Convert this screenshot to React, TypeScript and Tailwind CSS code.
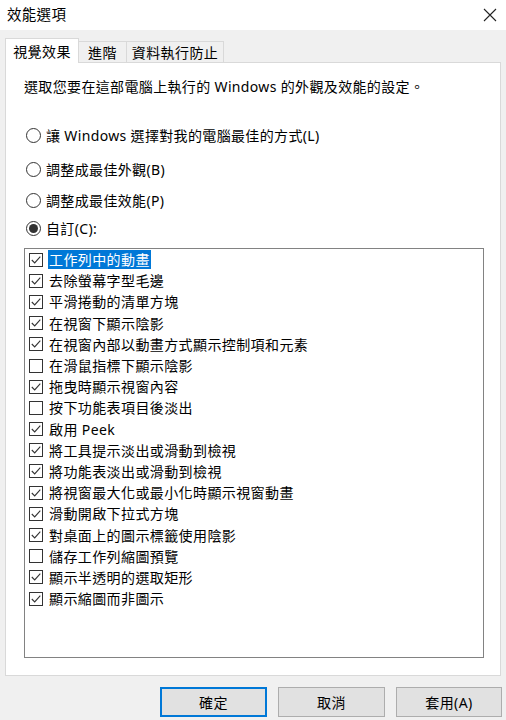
import React from "react";

const font = { fontFamily: '"Noto Sans", "Noto Sans CJK TC", sans-serif' };

const items: [string, boolean][] = [
  ["工作列中的動畫", true],
  ["去除螢幕字型毛邊", true],
  ["平滑捲動的清單方塊", true],
  ["在視窗下顯示陰影", true],
  ["在視窗內部以動畫方式顯示控制項和元素", true],
  ["在滑鼠指標下顯示陰影", false],
  ["拖曳時顯示視窗內容", true],
  ["按下功能表項目後淡出", false],
  ["啟用 Peek", true],
  ["將工具提示淡出或滑動到檢視", true],
  ["將功能表淡出或滑動到檢視", true],
  ["將視窗最大化或最小化時顯示視窗動畫", true],
  ["滑動開啟下拉式方塊", true],
  ["對桌面上的圖示標籤使用陰影", true],
  ["儲存工作列縮圖預覽", false],
  ["顯示半透明的選取矩形", true],
  ["顯示縮圖而非圖示", true],
];

function Radio({ checked }: { checked?: boolean }) {
  return (
    <span className="w-[15px] h-[15px] rounded-full border border-[#333] bg-white flex items-center justify-center shrink-0">
      {checked && <span className="w-[9px] h-[9px] rounded-full bg-[#333]" />}
    </span>
  );
}

function Check({ checked }: { checked: boolean }) {
  return (
    <span className="w-[14px] h-[14px] border border-[#333] bg-white flex items-center justify-center shrink-0">
      {checked && (
        <svg width="12" height="12" viewBox="0 0 12 12">
          <path d="M1.8 6 L4.7 8.9 L10.3 2.6" fill="none" stroke="#333" strokeWidth="1.1" />
        </svg>
      )}
    </span>
  );
}

export default function App() {
  return (
    <div className="w-[506px] h-[720px] flex flex-col bg-[#f0f0f0] text-[14px] text-black overflow-hidden" style={font}>
      <div className="h-[30px] bg-white flex items-center justify-between pl-[7px] pr-[9px] shrink-0">
        <span className="text-[14.5px] tracking-[0.3px]">效能選項</span>
        <svg width="14" height="14" viewBox="0 0 14 14">
          <path d="M1 1 L13 13 M13 1 L1 13" stroke="#222" strokeWidth="1.1" />
        </svg>
      </div>
      <div className="flex-1 flex flex-col pl-[5px] pr-[5px] pt-[8px]">
        <div className="flex items-end h-[24px] relative z-10">
          <div className="h-[25px] -mb-[1px] w-[74px] bg-white border border-[#d9d9d9] border-b-0 flex items-center justify-center tracking-[0.4px]">
            視覺效果
          </div>
          <div className="h-[21px] w-[48px] bg-[#f0f0f0] border border-[#d9d9d9] border-l-0 border-b-0 flex items-center justify-center tracking-[0.4px]">
            進階
          </div>
          <div className="h-[21px] w-[97px] bg-[#f0f0f0] border border-[#d9d9d9] border-l-0 border-b-0 flex items-center justify-center tracking-[0.4px]">
            資料執行防止
          </div>
        </div>
        <div className="h-[614px] bg-white border border-[#d9d9d9] pl-[18px] pr-[16px] pt-[14px] flex flex-col">
          <div className="h-[20px] leading-[20px] tracking-[0.35px]">選取您要在這部電腦上執行的 Windows 的外觀及效能的設定。</div>
          <div className="mt-[28px] h-[20px] flex items-center gap-[5px] pl-[2px] tracking-[0.35px]">
            <Radio />
            <span>讓 Windows 選擇對我的電腦最佳的方式(L)</span>
          </div>
          <div className="mt-[14px] h-[20px] flex items-center gap-[5px] pl-[2px] tracking-[0.35px]">
            <Radio />
            <span>調整成最佳外觀(B)</span>
          </div>
          <div className="mt-[11px] h-[20px] flex items-center gap-[5px] pl-[2px] tracking-[0.35px]">
            <Radio />
            <span>調整成最佳效能(P)</span>
          </div>
          <div className="mt-[8px] h-[20px] flex items-center gap-[5px] pl-[2px] tracking-[0.35px]">
            <Radio checked />
            <span>自訂(C):</span>
          </div>
          <div className="mt-[10px] h-[410px] w-[460px] border border-[#828282] bg-white pl-[4px] flex flex-col">
            {items.map(([label, checked], i) => (
              <div key={i} className="h-[21.2px] flex items-center gap-[5px] tracking-[0.4px]">
                <Check checked={checked} />
                <span className={i === 0 ? "bg-[#0078d7] text-white px-[1px] leading-[19px]" : "px-[1px]"}>{label}</span>
              </div>
            ))}
          </div>
        </div>
        <div className="flex justify-end gap-[11px] mt-[11px] -mr-[1px]">
          <button className="w-[107px] h-[30px] bg-[#e1e1e1] border-2 border-[#0078d7] flex items-center justify-center tracking-[0.4px]">確定</button>
          <button className="w-[107px] h-[30px] bg-[#e1e1e1] border border-[#adadad] flex items-center justify-center tracking-[0.4px]">取消</button>
          <button className="w-[106px] h-[30px] bg-[#e1e1e1] border border-[#adadad] flex items-center justify-center tracking-[0.4px]">套用(A)</button>
        </div>
      </div>
    </div>
  );
}
